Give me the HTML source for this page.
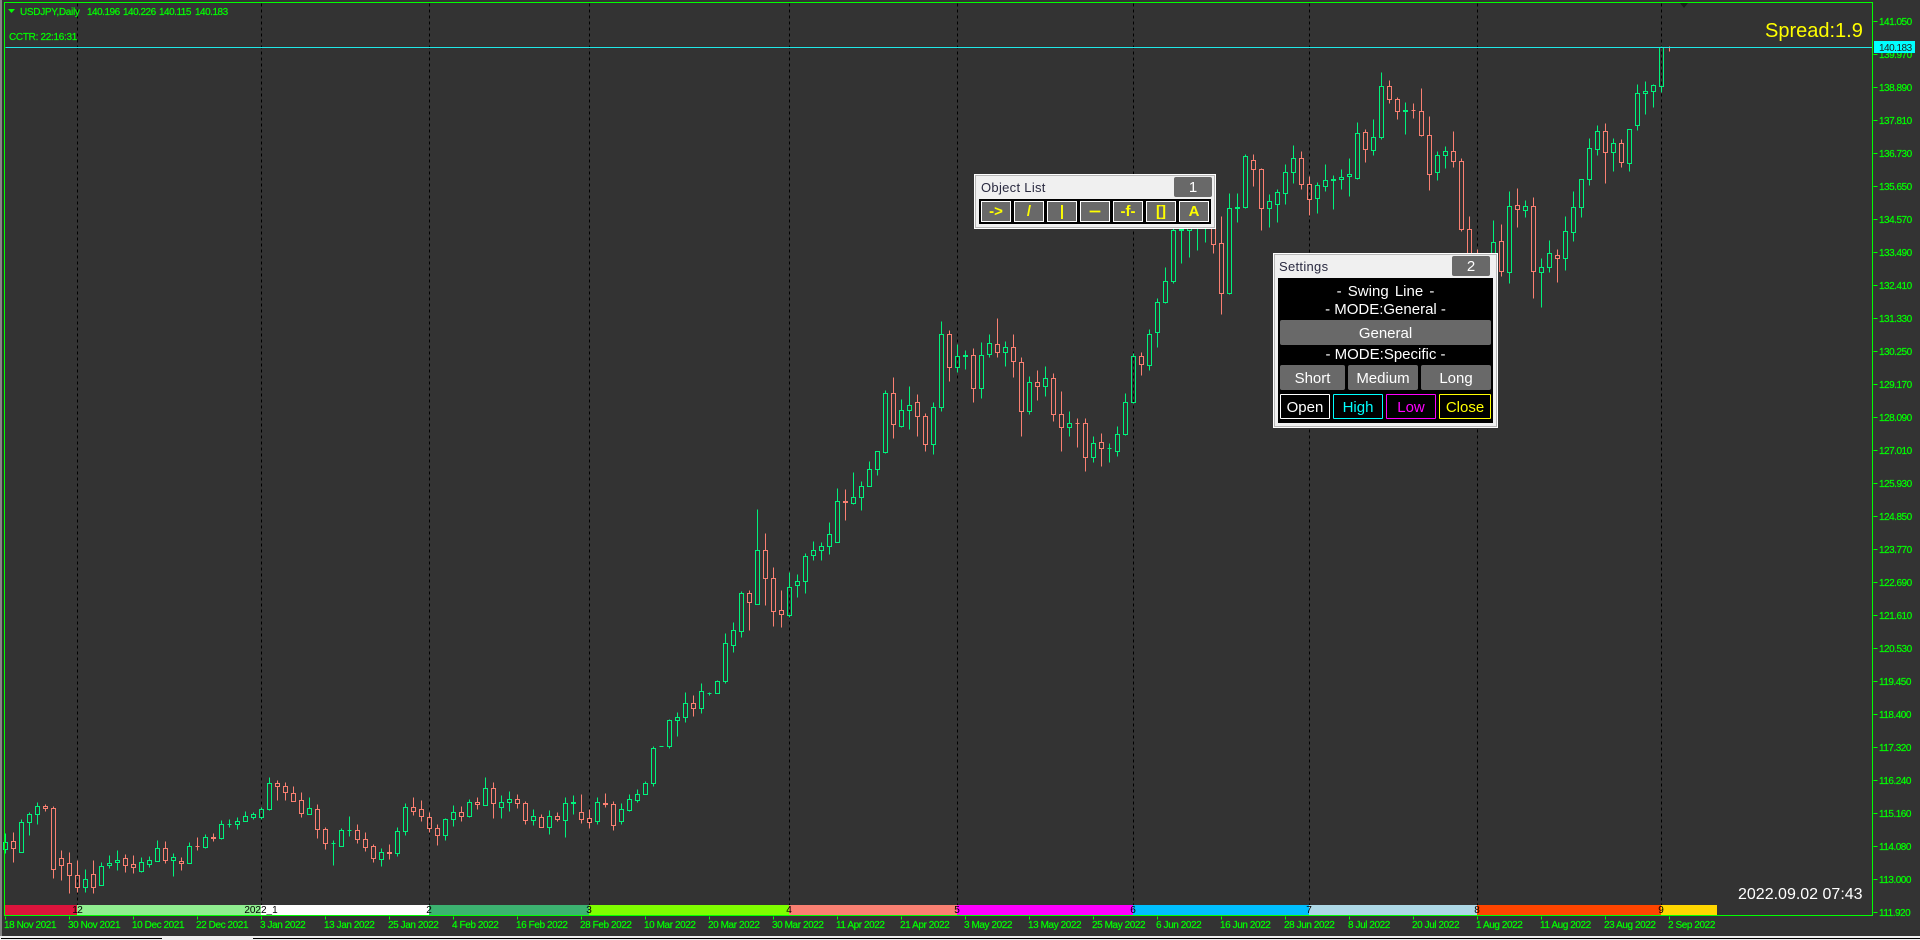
<!DOCTYPE html>
<html lang="en"><head><meta charset="utf-8"><title>USDJPY,Daily</title>
<style>
html,body{margin:0;padding:0;background:#333}
body{position:relative;width:1920px;height:940px;overflow:hidden;font-family:"Liberation Sans",sans-serif}
svg.c{position:absolute;left:0;top:0}
svg text{font-family:"Liberation Sans",sans-serif}
.g text{fill:#0f0;stroke:#0f0;stroke-width:.22px;font-size:10px;letter-spacing:-.5px}
.g .h{letter-spacing:-.42px}
.b text{fill:#000;font-size:10px;text-anchor:middle}
.p{position:absolute;box-sizing:border-box;background:#f0f0f0;border:1px solid #fff;outline:1px solid #b8b8b8;outline-offset:-2px}
.a{position:absolute;box-sizing:border-box;text-align:center;white-space:nowrap}
.t{font-size:13px;letter-spacing:.3px;color:#2a2a40;line-height:16px}
.n{background:#696969;color:#fff;border-radius:2px;font-size:15px;line-height:21px}
.k{background:#000}
.o{background:#696969;border:1px solid #fff;color:#ff0;font-weight:bold;font-size:15px;line-height:19px;top:201px;width:30px;height:21px}
.w{color:#fff;font-size:15px;line-height:17px}
.m{background:#696969;color:#fff;font-size:15px;line-height:27px;border-radius:2px}
.x{background:#000;font-size:15px;line-height:25px;border:1px solid;top:394px;height:25px;border-radius:1px}
</style></head><body>
<svg class="c" width="1920" height="940" viewBox="0 0 1920 940" xmlns="http://www.w3.org/2000/svg">
<rect width="1920" height="940" fill="#333"/>
<rect x="0" y="0" width="2" height="936" fill="#858585"/>
<rect x="0" y="936" width="1920" height="4" fill="#f0f0f0"/>
<path d="M1 938h161M253 938h1667" stroke="#000" shape-rendering="crispEdges" transform="translate(0 .5)"/>
<g fill="none" shape-rendering="crispEdges" transform="translate(.5 .5)">
<path stroke="#000" stroke-dasharray="3 3" d="M77 3V915M261 3V915M429 3V915M589 3V915M789 3V915M957 3V915M1133 3V915M1309 3V915M1477 3V915M1661 3V915"/>
<path stroke="#00f27c" d="M5 833V842m-2 0h4V849h-4zM5 849V853M21 819V822m-2 0h4V852h-4zM29 812V814m-2 0h4V822h-4zM29 822V835M37 802V806m-2 0h4V814h-4zM37 814V824M85 869V879m-2 0h4V887h-4zM85 887V892M101 862V866m-2 0h4V885h-4zM109 855V863m-2 0h4V865h-4zM109 865V868M117 850V860m-2 0h4V862h-4zM117 862V870M141 857V862m-2 0h4V871h-4zM141 871V872M149 856V860m-2 0h4V864h-4zM149 864V867M157 840V848m-2 0h4V861h-4zM173 853V857m-2 0h4V860h-4zM173 860V876M189 842V846m-2 0h4V863h-4zM205 834V837m-2 0h4V847h-4zM205 847V848M221 820V824m-2 0h4V838h-4zM221 838V839M229 819V824m-2 0h4V824h-4zM229 824V827M237 817V821m-2 0h4V824h-4zM237 824V829M245 811V816m-2 0h4V821h-4zM253 812V814m-2 0h4V817h-4zM253 817V819M261 807V809m-2 0h4V817h-4zM261 817V819M269 777V783m-2 0h4V809h-4zM269 809V810M309 797V808m-2 0h4V814h-4zM333 840V843m-2 0h4V843h-4zM333 843V865M341 828V830m-2 0h4V846h-4zM349 816V830m-2 0h4V830h-4zM349 830V836M381 848V852m-2 0h4V859h-4zM381 859V866M397 827V831m-2 0h4V853h-4zM397 853V856M405 803V807m-2 0h4V831h-4zM405 831V835M445 818V819m-2 0h4V835h-4zM445 835V840M453 805V812m-2 0h4V819h-4zM453 819V826M469 799V802m-2 0h4V816h-4zM469 816V817M485 777V788m-2 0h4V805h-4zM501 795V802m-2 0h4V807h-4zM501 807V818M509 791V799m-2 0h4V802h-4zM509 802V811M533 809V816m-2 0h4V820h-4zM533 820V825M549 810V816m-2 0h4V827h-4zM549 827V834M565 797V803m-2 0h4V820h-4zM565 820V837M573 795V802m-2 0h4V803h-4zM573 803V814M597 797V802m-2 0h4V821h-4zM597 821V824M621 803V809m-2 0h4V821h-4zM621 821V824M629 794V799m-2 0h4V810h-4zM629 810V811M637 789V794m-2 0h4V800h-4zM637 800V802M645 781V783m-2 0h4V794h-4zM653 746V748m-2 0h4V783h-4zM653 783V786M659 746h4M669 719V720m-2 0h4V746h-4zM669 746V748M677 712V717m-2 0h4V720h-4zM677 720V736M685 692V703m-2 0h4V717h-4zM685 717V722M701 683V691m-2 0h4V708h-4zM701 708V713M709 692V693m-2 0h4V693h-4zM709 693V695M717 680V681m-2 0h4V693h-4zM725 633V643m-2 0h4V681h-4zM725 681V683M733 622V630m-2 0h4V645h-4zM733 645V652M741 591V593m-2 0h4V631h-4zM741 631V637M757 509V550m-2 0h4V604h-4zM789 572V587m-2 0h4V615h-4zM789 615V617M797 574V581m-2 0h4V585h-4zM797 585V597M805 553V556m-2 0h4V581h-4zM805 581V593M813 541V550m-2 0h4V555h-4zM813 555V560M821 542V546m-2 0h4V550h-4zM821 550V560M829 522V534m-2 0h4V546h-4zM829 546V554M837 488V501m-2 0h4V542h-4zM853 472V497m-2 0h4V503h-4zM853 503V504M861 481V486m-2 0h4V497h-4zM861 497V510M869 461V469m-2 0h4V486h-4zM877 451V451m-2 0h4V469h-4zM877 469V475M885 390V393m-2 0h4V452h-4zM885 452V453M901 399V410m-2 0h4V426h-4zM901 426V427M909 386V405m-2 0h4V410h-4zM909 410V429M933 402V407m-2 0h4V444h-4zM933 444V454M941 321V334m-2 0h4V407h-4zM941 407V411M957 344V356m-2 0h4V367h-4zM957 367V372M965 350V355m-2 0h4V356h-4zM965 356V369M981 342V355m-2 0h4V388h-4zM981 388V398M989 334V343m-2 0h4V354h-4zM989 354V357M1005 341V347m-2 0h4V352h-4zM1005 352V366M1029 376V382m-2 0h4V411h-4zM1029 411V414M1045 366V378m-2 0h4V386h-4zM1045 386V396M1069 411V423m-2 0h4V427h-4zM1069 427V436M1093 436V443m-2 0h4V457h-4zM1093 457V462M1109 443V448m-2 0h4V448h-4zM1109 448V462M1117 426V434m-2 0h4V451h-4zM1117 451V456M1125 393V402m-2 0h4V434h-4zM1125 434V435M1133 353V356m-2 0h4V402h-4zM1133 402V403M1149 329V334m-2 0h4V365h-4zM1149 365V370M1157 298V302m-2 0h4V332h-4zM1157 332V347M1165 267V281m-2 0h4V302h-4zM1165 302V303M1173 225V230m-2 0h4V281h-4zM1173 281V283M1181 225V229m-2 0h4V230h-4zM1181 230V263M1189 220V225m-2 0h4V230h-4zM1189 230V257M1197 215V220m-2 0h4V228h-4zM1197 228V250M1205 215V222m-2 0h4V228h-4zM1205 228V242M1229 193V208m-2 0h4V293h-4zM1229 293V294M1237 193V207m-2 0h4V208h-4zM1237 208V222M1245 154V156m-2 0h4V207h-4zM1245 207V208M1269 194V201m-2 0h4V208h-4zM1269 208V227M1277 189V192m-2 0h4V204h-4zM1277 204V222M1285 164V172m-2 0h4V193h-4zM1285 193V204M1293 145V158m-2 0h4V172h-4zM1293 172V183M1317 182V185m-2 0h4V198h-4zM1317 198V213M1325 164V180m-2 0h4V186h-4zM1325 186V191M1333 175V179m-2 0h4V180h-4zM1333 180V209M1341 169V177m-2 0h4V179h-4zM1341 179V189M1349 158V174m-2 0h4V176h-4zM1349 176V196M1357 122V133m-2 0h4V178h-4zM1357 178V179M1373 119V137m-2 0h4V150h-4zM1373 150V155M1381 72V86m-2 0h4V137h-4zM1381 137V139M1405 102V110m-2 0h4V111h-4zM1405 111V134M1437 151V155m-2 0h4V172h-4zM1437 172V180M1445 146V151m-2 0h4V155h-4zM1445 155V168M1493 220V242m-2 0h4V265h-4zM1493 265V270M1509 191V206m-2 0h4V272h-4zM1509 272V283M1525 200V206m-2 0h4V210h-4zM1525 210V217M1541 258V267m-2 0h4V272h-4zM1541 272V307M1549 240V253m-2 0h4V267h-4zM1549 267V272M1565 216V231m-2 0h4V258h-4zM1565 258V270M1573 191V207m-2 0h4V232h-4zM1573 232V241M1581 179V179m-2 0h4V207h-4zM1581 207V217M1589 138V148m-2 0h4V179h-4zM1589 179V185M1597 125V131m-2 0h4V149h-4zM1597 149V155M1613 138V143m-2 0h4V152h-4zM1613 152V171M1629 129V129m-2 0h4V163h-4zM1629 163V171M1637 84V93m-2 0h4V125h-4zM1637 125V130M1645 81V91m-2 0h4V93h-4zM1645 93V114M1653 84V85m-2 0h4V91h-4zM1653 91V107M1661 46V47m-2 0h4V86h-4zM1661 86V92"/>
<path stroke="#fa8072" d="M13 832V841m-2 0h4V848h-4zM13 848V862M45 804V806m-2 0h4V808h-4zM45 808V811M53 806V808m-2 0h4V869h-4zM53 869V878M61 850V858m-2 0h4V865h-4zM61 865V880M69 852V863m-2 0h4V875h-4zM69 875V893M77 860V875m-2 0h4V887h-4zM77 887V892M93 860V874m-2 0h4V887h-4zM93 887V893M125 854V858m-2 0h4V865h-4zM125 865V872M133 855V864m-2 0h4V867h-4zM133 867V873M165 841V848m-2 0h4V860h-4zM165 860V863M181 857V861m-2 0h4V863h-4zM181 863V870M197 837V846m-2 0h4V846h-4zM197 846V850M213 833V837m-2 0h4V838h-4zM213 838V841M277 780V783m-2 0h4V786h-4zM277 786V800M285 782V786m-2 0h4V792h-4zM285 792V800M293 786V793m-2 0h4V801h-4zM301 792V800m-2 0h4V813h-4zM301 813V817M317 804V809m-2 0h4V829h-4zM317 829V838M325 827V829m-2 0h4V843h-4zM325 843V849M357 824V830m-2 0h4V839h-4zM357 839V843M365 832V839m-2 0h4V847h-4zM365 847V851M373 844V846m-2 0h4V858h-4zM373 858V862M389 844V852m-2 0h4V853h-4zM389 853V859M413 797V807m-2 0h4V811h-4zM413 811V815M421 800V809m-2 0h4V816h-4zM421 816V821M429 812V817m-2 0h4V828h-4zM429 828V832M437 824V828m-2 0h4V835h-4zM437 835V845M461 806V812m-2 0h4V816h-4zM461 816V821M477 797V802m-2 0h4V804h-4zM477 804V809M493 782V788m-2 0h4V803h-4zM493 803V818M517 794V799m-2 0h4V803h-4zM517 803V808M525 801V803m-2 0h4V820h-4zM525 820V824M541 814V817m-2 0h4V827h-4zM557 812V816m-2 0h4V819h-4zM557 819V821M581 794V812m-2 0h4V819h-4zM581 819V823M589 809V818m-2 0h4V822h-4zM589 822V828M605 793V803m-2 0h4V804h-4zM605 804V807M613 801V804m-2 0h4V825h-4zM613 825V830M693 695V703m-2 0h4V708h-4zM693 708V716M749 590V593m-2 0h4V602h-4zM749 602V630M765 533V550m-2 0h4V578h-4zM765 578V605M773 567V578m-2 0h4V611h-4zM773 611V626M781 590V610m-2 0h4V614h-4zM781 614V627M845 489V501m-2 0h4V502h-4zM845 502V520M893 377V393m-2 0h4V424h-4zM893 424V438M917 394V402m-2 0h4V416h-4zM917 416V436M925 413V416m-2 0h4V444h-4zM925 444V451M949 330V334m-2 0h4V367h-4zM949 367V381M973 348V355m-2 0h4V388h-4zM973 388V402M997 318V344m-2 0h4V352h-4zM997 352V357M1013 334V347m-2 0h4V361h-4zM1013 361V377M1021 357V362m-2 0h4V411h-4zM1021 411V436M1037 370V382m-2 0h4V386h-4zM1037 386V400M1053 373V378m-2 0h4V414h-4zM1053 414V421M1061 391V414m-2 0h4V427h-4zM1061 427V451M1077 418V423m-2 0h4V423h-4zM1077 423V447M1085 418V423m-2 0h4V457h-4zM1085 457V471M1101 433V442m-2 0h4V448h-4zM1101 448V466M1141 352V356m-2 0h4V364h-4zM1141 364V375M1213 220V226m-2 0h4V244h-4zM1213 244V253M1221 216V243m-2 0h4V293h-4zM1221 293V314M1253 154V160m-2 0h4V169h-4zM1253 169V186M1261 168V169m-2 0h4V208h-4zM1261 208V230M1301 151V158m-2 0h4V184h-4zM1301 184V189M1309 176V184m-2 0h4V199h-4zM1309 199V215M1365 129V132m-2 0h4V149h-4zM1365 149V162M1389 80V86m-2 0h4V99h-4zM1389 99V103M1397 97V99m-2 0h4V111h-4zM1397 111V119M1413 103V110m-2 0h4V110h-4zM1413 110V118M1421 88V111m-2 0h4V135h-4zM1421 135V136M1429 116V135m-2 0h4V174h-4zM1429 174V190M1453 131V151m-2 0h4V161h-4zM1453 161V167M1461 158V161m-2 0h4V229h-4zM1461 229V231M1469 216V229m-2 0h4V258h-4zM1469 258V265M1477 249V256m-2 0h4V270h-4zM1477 270V275M1501 224V241m-2 0h4V271h-4zM1501 271V276M1517 188V205m-2 0h4V209h-4zM1517 209V227M1533 197V206m-2 0h4V271h-4zM1533 271V298M1557 249V255m-2 0h4V258h-4zM1557 258V282M1605 123V131m-2 0h4V152h-4zM1605 152V183M1621 139V143m-2 0h4V162h-4zM1621 162V167M1669 46V51"/>
<path stroke="#20e8e8" d="M5 47H1872"/>
</g>
<!-- top marker -->
<path d="M1680 3h8l-4 5z" fill="#1c1c1c"/>
<!-- period colour bars -->
<g shape-rendering="crispEdges">
<rect x="5" y="905" width="72" height="10" fill="#dc143c"/>
<rect x="77" y="905" width="184" height="10" fill="#90ee90"/>
<rect x="261" y="905" width="168" height="10" fill="#fff"/>
<rect x="429" y="905" width="160" height="10" fill="#3cb371"/>
<rect x="589" y="905" width="200" height="10" fill="#7fff00"/>
<rect x="789" y="905" width="168" height="10" fill="#fa8072"/>
<rect x="957" y="905" width="176" height="10" fill="#f0f"/>
<rect x="1133" y="905" width="176" height="10" fill="#00bfff"/>
<rect x="1309" y="905" width="168" height="10" fill="#add8e6"/>
<rect x="1477" y="905" width="184" height="10" fill="#ff4500"/>
<rect x="1661" y="905" width="56" height="10" fill="#ffd700"/>
</g>
<g class="b">
<text x="75" y="913">1</text><text x="80" y="913">2</text><text x="261" y="913">2022_1</text><text x="429" y="913">2</text><text x="589" y="913">3</text><text x="789" y="913">4</text><text x="957" y="913">5</text><text x="1133" y="913">6</text><text x="1309" y="913">7</text><text x="1477" y="913">8</text><text x="1661" y="913">9</text>
</g>
<!-- frame and ticks -->
<g fill="none" stroke="#0f0" shape-rendering="crispEdges" transform="translate(.5 .5)">
<path d="M4 2H1872V915H4z"/>
<path d="M1873 21h4M1873 54h4M1873 87h4M1873 120h4M1873 153h4M1873 186h4M1873 219h4M1873 252h4M1873 285h4M1873 318h4M1873 351h4M1873 384h4M1873 417h4M1873 450h4M1873 483h4M1873 516h4M1873 549h4M1873 582h4M1873 615h4M1873 648h4M1873 681h4M1873 714h4M1873 747h4M1873 780h4M1873 813h4M1873 846h4M1873 879h4M1873 912h4"/>
<path d="M5 916v3M69 916v3M133 916v3M197 916v3M261 916v3M325 916v3M389 916v3M453 916v3M517 916v3M581 916v3M645 916v3M709 916v3M773 916v3M837 916v3M901 916v3M965 916v3M1029 916v3M1093 916v3M1157 916v3M1221 916v3M1285 916v3M1349 916v3M1413 916v3M1477 916v3M1541 916v3M1605 916v3M1669 916v3"/>
</g>
<g class="g">
<text x="1879" y="25">141.050</text><text x="1879" y="58">139.970</text><text x="1879" y="91">138.890</text><text x="1879" y="124">137.810</text><text x="1879" y="157">136.730</text><text x="1879" y="190">135.650</text><text x="1879" y="223">134.570</text><text x="1879" y="256">133.490</text><text x="1879" y="289">132.410</text><text x="1879" y="322">131.330</text><text x="1879" y="355">130.250</text><text x="1879" y="388">129.170</text><text x="1879" y="421">128.090</text><text x="1879" y="454">127.010</text><text x="1879" y="487">125.930</text><text x="1879" y="520">124.850</text><text x="1879" y="553">123.770</text><text x="1879" y="586">122.690</text><text x="1879" y="619">121.610</text><text x="1879" y="652">120.530</text><text x="1879" y="685">119.450</text><text x="1879" y="718">118.400</text><text x="1879" y="751">117.320</text><text x="1879" y="784">116.240</text><text x="1879" y="817">115.160</text><text x="1879" y="850">114.080</text><text x="1879" y="883">113.000</text><text x="1879" y="916">111.920</text>
<g>
<text class="h" x="4" y="928">18 Nov 2021</text><text class="h" x="68" y="928">30 Nov 2021</text><text class="h" x="132" y="928">10 Dec 2021</text><text class="h" x="196" y="928">22 Dec 2021</text><text class="h" x="260" y="928">3 Jan 2022</text><text class="h" x="324" y="928">13 Jan 2022</text><text class="h" x="388" y="928">25 Jan 2022</text><text class="h" x="452" y="928">4 Feb 2022</text><text class="h" x="516" y="928">16 Feb 2022</text><text class="h" x="580" y="928">28 Feb 2022</text><text class="h" x="644" y="928">10 Mar 2022</text><text class="h" x="708" y="928">20 Mar 2022</text><text class="h" x="772" y="928">30 Mar 2022</text><text class="h" x="836" y="928">11 Apr 2022</text><text class="h" x="900" y="928">21 Apr 2022</text><text class="h" x="964" y="928">3 May 2022</text><text class="h" x="1028" y="928">13 May 2022</text><text class="h" x="1092" y="928">25 May 2022</text><text class="h" x="1156" y="928">6 Jun 2022</text><text class="h" x="1220" y="928">16 Jun 2022</text><text class="h" x="1284" y="928">28 Jun 2022</text><text class="h" x="1348" y="928">8 Jul 2022</text><text class="h" x="1412" y="928">20 Jul 2022</text><text class="h" x="1476" y="928">1 Aug 2022</text><text class="h" x="1540" y="928">11 Aug 2022</text><text class="h" x="1604" y="928">23 Aug 2022</text><text class="h" x="1668" y="928">2 Sep 2022</text>
</g>
<text x="20" y="15" style="letter-spacing:-.3px">USDJPY,Daily</text>
<text x="87" y="15">140.196</text><text x="123" y="15">140.226</text><text x="159" y="15">140.115</text><text x="195" y="15">140.183</text>
<text x="9" y="40" style="letter-spacing:-.3px">CCTR: 22:16:31</text>
</g>
<path d="M8 9h7l-3.5 4z" fill="#0f0"/>
<rect x="1874" y="41" width="41" height="12" fill="#0ff"/>
<text x="1879" y="51" font-size="10" letter-spacing="-.5" fill="#222">140.183</text>
<text x="1765" y="37" font-size="20" fill="#ff0">Spread:1.9</text>
<text x="1738" y="899" font-size="16" fill="#fff">2022.09.02 07:43</text>
</svg>

<!-- Object List panel -->
<div class="p" style="left:974px;top:174px;width:242px;height:55px"></div>
<div class="a t" style="left:981px;top:180px;text-align:left">Object List</div>
<div class="a n" style="left:1174px;top:177px;width:38px;height:20px">1</div>
<div class="a k" style="left:979px;top:199px;width:232px;height:25px"></div>
<div class="a o" style="left:981px">-&gt;</div>
<div class="a o" style="left:1014px">/</div>
<div class="a o" style="left:1047px">|</div>
<div class="a o" style="left:1080px;font-size:10px;-webkit-text-stroke:.7px #ff0">—</div>
<div class="a o" style="left:1113px">-f-</div>
<div class="a o" style="left:1146px">[]</div>
<div class="a o" style="left:1179px">A</div>

<!-- Settings panel -->
<div class="p" style="left:1273px;top:253px;width:225px;height:175px"></div>
<div class="a t" style="left:1279px;top:259px;text-align:left">Settings</div>
<div class="a n" style="left:1452px;top:256px;width:38px;height:20px">2</div>
<div class="a k" style="left:1278px;top:278px;width:215px;height:145px"></div>
<div class="a w" style="left:1278px;width:215px;top:283px;word-spacing:2px">- Swing Line -</div>
<div class="a w" style="left:1278px;width:215px;top:301px">- MODE:General -</div>
<div class="a m" style="left:1280px;top:320px;width:211px;height:25px">General</div>
<div class="a w" style="left:1278px;width:215px;top:346px">- MODE:Specific -</div>
<div class="a m" style="left:1280px;top:365px;width:65px;height:25px">Short</div>
<div class="a m" style="left:1348px;top:365px;width:70px;height:25px">Medium</div>
<div class="a m" style="left:1421px;top:365px;width:70px;height:25px">Long</div>
<div class="a x" style="left:1280px;width:50px;color:#fff;border-color:#fff">Open</div>
<div class="a x" style="left:1333px;width:50px;color:#0ff;border-color:#0ff">High</div>
<div class="a x" style="left:1386px;width:50px;color:#f0f;border-color:#f0f">Low</div>
<div class="a x" style="left:1439px;width:52px;color:#ff0;border-color:#ff0">Close</div>
</body></html>
